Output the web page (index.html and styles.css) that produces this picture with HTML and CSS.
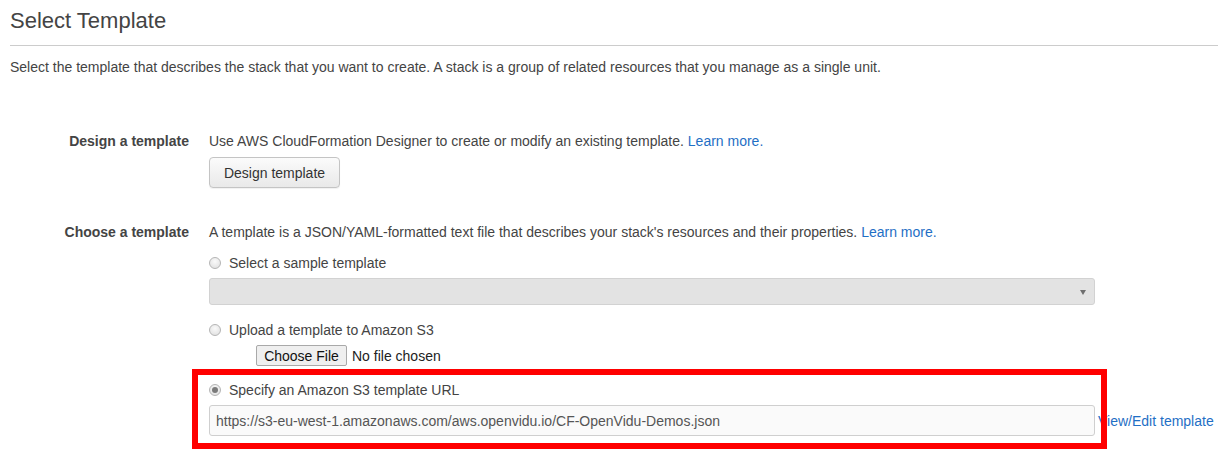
FILE: index.html
```html
<!DOCTYPE html>
<html>
<head>
<meta charset="utf-8">
<link rel="stylesheet" href="styles.css">
</head>
<body>
<div class="page">
  <h1 class="title">Select Template</h1>
  <hr class="rule">
  <p class="intro">Select the template that describes the stack that you want to create. A stack is a group of related resources that you manage as a single unit.</p>

  <div class="form">
    <div class="row row-design">
      <div class="label">Design a template</div>
      <div class="content">
        <div class="line">Use AWS CloudFormation Designer to create or modify an existing template. <a class="link" href="#">Learn more.</a></div>
        <button class="btn" type="button">Design template</button>
      </div>
    </div>

    <div class="row row-choose">
      <div class="label">Choose a template</div>
      <div class="content">
        <div class="line">A template is a JSON/YAML-formatted text file that describes your stack's resources and their properties. <a class="link" href="#">Learn more.</a></div>

        <div class="option opt-sample"><span class="radio"></span><span>Select a sample template</span></div>
        <div class="select"><span class="caret"></span></div>

        <div class="option opt-upload"><span class="radio"></span><span>Upload a template to Amazon S3</span></div>
        <div class="file"><span class="file-btn">Choose File</span><span class="file-name">No file chosen</span></div>

        <div class="url-block">
          <div class="option opt-url"><span class="radio checked"></span><span>Specify an Amazon S3 template URL</span></div>
          <div class="url-row">
            <div class="input">https://s3-eu-west-1.amazonaws.com/aws.openvidu.io/CF-OpenVidu-Demos.json</div>
            <a class="link view-link" href="#">View/Edit template</a>
          </div>
          <div class="highlight"></div>
        </div>
      </div>
    </div>
  </div>
</div>
</body>
</html>
```

FILE: styles.css
```css
html, body {
  margin: 0;
  padding: 0;
  background: #ffffff;
}

body {
  font-family: "Liberation Sans", Arial, sans-serif;
  font-size: 14px;
  line-height: 20px;
  color: #444444;
}

.page {
  padding-left: 10px;
  min-height: 463px;
  box-sizing: border-box;
}

.title {
  margin: 8px 0 0 0;
  font-size: 22px;
  font-weight: normal;
  line-height: 26px;
  color: #444444;
}

.rule {
  margin: 11px 0 0 0;
  border: 0;
  border-top: 1px solid #cccccc;
  height: 0;
}

.intro {
  margin: 11px 0 0 0;
  white-space: nowrap;
}

.form {
  margin-top: 54px;
}

.row {
  display: grid;
  grid-template-columns: 179px 1fr;
  column-gap: 20px;
}

.row-choose {
  margin-top: 34px;
}

.label {
  text-align: right;
  font-weight: bold;
  color: #444444;
}

.content {
  display: flex;
  flex-direction: column;
  align-items: flex-start;
  white-space: nowrap;
}

.link {
  color: #1f6fc5;
  text-decoration: none;
}

.btn {
  margin-top: 6px;
  height: 31px;
  width: 131px;
  padding: 0;
  font-family: "Liberation Sans", Arial, sans-serif;
  font-size: 14px;
  color: #333333;
  border: 1px solid #c4c4c4;
  border-radius: 4px;
  background: linear-gradient(#fbfbfb, #e9e9e9);
  box-shadow: 0 1px 1px rgba(0, 0, 0, 0.06);
}

.option {
  display: flex;
  align-items: center;
  gap: 8px;
  height: 20px;
}

.opt-sample {
  margin-top: 11px;
}

.opt-upload {
  margin-top: 15px;
}

.opt-url {
  margin-top: 0;
}

.radio {
  box-sizing: border-box;
  width: 12px;
  height: 12px;
  border-radius: 50%;
  border: 1px solid #b5b5b5;
  background: radial-gradient(circle at 50% 35%, #fafafa, #dddddd);
  position: relative;
  flex: none;
}

.radio.checked::after {
  content: "";
  position: absolute;
  left: 2px;
  top: 2px;
  width: 6px;
  height: 6px;
  border-radius: 50%;
  background: #7a7a7a;
}

.select {
  box-sizing: border-box;
  margin-top: 5px;
  width: 886px;
  height: 27px;
  border: 1px solid #d2d2d2;
  border-radius: 3px;
  background: #e3e3e3;
  display: flex;
  align-items: center;
  justify-content: flex-end;
  padding-right: 8px;
}

.caret {
  width: 0;
  height: 0;
  border-left: 3px solid transparent;
  border-right: 3px solid transparent;
  border-top: 5px solid #6f6f6f;
  margin-top: 2px;
}

.file {
  margin-top: 5px;
  margin-left: 47px;
  display: flex;
  align-items: center;
  height: 21px;
}

.file-btn {
  box-sizing: border-box;
  height: 21px;
  width: 91px;
  border: 1px solid #a9a9a9;
  border-radius: 2px;
  background: #efefef;
  color: #111111;
  display: flex;
  align-items: center;
  justify-content: center;
  font-size: 14px;
}

.file-name {
  margin-left: 5px;
  color: #222222;
}

.url-block {
  position: relative;
  margin-top: 14px;
}

.url-row {
  margin-top: 5px;
  display: flex;
  align-items: center;
}

.input {
  box-sizing: border-box;
  width: 886px;
  height: 31px;
  border: 1px solid #cfcfcf;
  border-radius: 3px;
  background: #fafafa;
  color: #555555;
  padding-left: 6px;
  display: flex;
  align-items: center;
}

.view-link {
  margin-left: 3px;
}

.highlight {
  position: absolute;
  left: -17px;
  top: -11px;
  width: 915px;
  height: 80px;
  box-sizing: border-box;
  border: 6px solid #ff0000;
  pointer-events: none;
}
```
